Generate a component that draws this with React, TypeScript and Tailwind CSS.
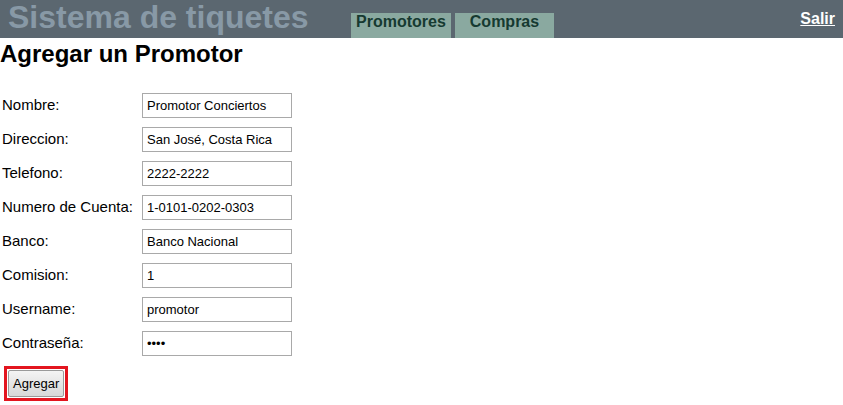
import React from "react";

const fields = [
  { label: "Nombre:", value: "Promotor Conciertos" },
  { label: "Direccion:", value: "San José, Costa Rica" },
  { label: "Telefono:", value: "2222-2222" },
  { label: "Numero de Cuenta:", value: "1-0101-0202-0303" },
  { label: "Banco:", value: "Banco Nacional" },
  { label: "Comision:", value: "1" },
  { label: "Username:", value: "promotor" },
  { label: "Contraseña:", value: "1234", type: "password" },
];

const App = () => {
  return (
    <div className="min-h-[405px] bg-white font-['Liberation_Sans',Arial,sans-serif] text-black">
      <header className="relative flex h-[38px] items-end bg-[#5b6770]">
        <h1 className="absolute left-[8px] top-[-1px] text-[32px] font-bold leading-[36px] text-[#8899a6]">
          Sistema de tiquetes
        </h1>
        <nav className="ml-[351px] flex gap-[4px]">
          <a className="flex h-[25px] w-[100px] items-start justify-center bg-[#8aa9a0] text-[16px] font-bold leading-[18px] text-[#163a31]">
            Promotores
          </a>
          <a className="flex h-[25px] w-[99px] items-start justify-center bg-[#8aa9a0] text-[16px] font-bold leading-[18px] text-[#163a31]">
            Compras
          </a>
        </nav>
        <a className="absolute right-[8px] top-[7px] text-[16px] font-bold text-white underline">
          Salir
        </a>
      </header>

      <h2 className="mt-[1px] text-[24px] font-bold leading-[29px]">
        Agregar un Promotor
      </h2>

      <form className="mt-[25px] flex flex-col gap-[9px] pl-[2px]">
        {fields.map((f) => (
          <div key={f.label} className="flex h-[25px] items-center">
            <label className="w-[140px] text-[15px]">{f.label}</label>
            <input
              type={f.type ?? "text"}
              defaultValue={f.value}
              className="h-[25px] w-[150px] border border-[#a9a9a9] px-[4px] text-[13px] outline-none"
            />
          </div>
        ))}
        <div className="mt-[1px] ml-[2px] w-fit border-[3px] border-[#e3151f] p-[1px]">
          <button
            type="button"
            className="h-[27px] rounded-[2px] border border-[#9a9a9a] bg-gradient-to-b from-[#f4f4f4] to-[#d8d8d8] px-[4px] text-[13px]"
          >
            Agregar
          </button>
        </div>
      </form>
    </div>
  );
};

export default App;
